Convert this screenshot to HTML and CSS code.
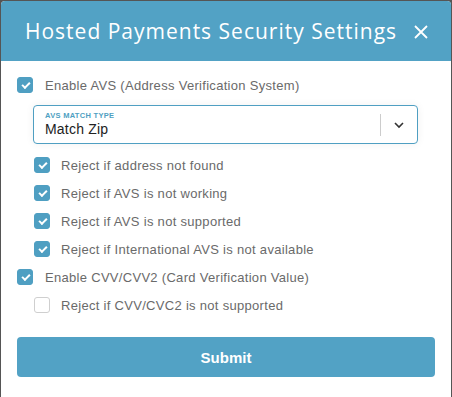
FILE: index.html
```html
<!DOCTYPE html>
<html lang="en">
<head>
    <meta charset="UTF-8">
    <title>Hosted Payments Security Settings</title>
    <link rel="stylesheet" href="styles.css">
</head>
<body>
<div class="modal">
    <div class="modal-header">
        <h2>Hosted Payments Security Settings</h2>
        <svg class="close" width="16" height="16" viewBox="0 0 16 16">
            <path d="M2 2 L14 14 M14 2 L2 14" stroke="#fff" stroke-width="1.8" fill="none"/>
        </svg>
    </div>
    <div class="modal-body">
        <label class="row">
            <span class="box checked"></span>
            Enable AVS (Address Verification System)
        </label>
        <div class="select">
            <div class="select-value">
                <span class="select-label">AVS MATCH TYPE</span>
                <span class="select-text">Match Zip</span>
            </div>
            <span class="select-sep"></span>
            <svg class="chevron" width="12" height="8" viewBox="0 0 12 8">
                <path d="M2 2 L6 6 L10 2" stroke="#333" stroke-width="1.6" fill="none"/>
            </svg>
        </div>
        <label class="row sub">
            <span class="box checked"></span>
            Reject if address not found
        </label>
        <label class="row sub">
            <span class="box checked"></span>
            Reject if AVS is not working
        </label>
        <label class="row sub">
            <span class="box checked"></span>
            Reject if AVS is not supported
        </label>
        <label class="row sub">
            <span class="box checked"></span>
            Reject if International AVS is not available
        </label>
        <label class="row">
            <span class="box checked"></span>
            Enable CVV/CVV2 (Card Verification Value)
        </label>
        <label class="row sub">
            <span class="box"></span>
            Reject if CVV/CVC2 is not supported
        </label>
        <button class="submit">Submit</button>
    </div>
</div>
</body>
</html>
```

FILE: styles.css
```css
html, body {
    margin: 0;
    background: #555555;
    height: 100%;
    overflow: hidden;
}

body {
    padding: 1px 1px 0 1px;
    box-sizing: border-box;
    font-family: "Liberation Sans", Arial, sans-serif;
}

.modal {
    background: #ffffff;
    border-radius: 4px 4px 0 0;
    height: 100%;
    overflow: hidden;
}

.modal-header {
    background: #52a2c5;
    height: 60px;
    display: flex;
    align-items: center;
    padding: 0 22px 0 24px;
}

.modal-header h2 {
    flex: 1;
    margin: 0;
    color: #ffffff;
    font-family: "Open Sans", sans-serif;
    font-weight: 400;
    font-size: 21px;
    letter-spacing: 1px;
    white-space: nowrap;
}

.close {
    margin-top: 1px;
}

.modal-body {
    padding: 10px 16px 0 16px;
    display: flex;
    flex-direction: column;
}

.row {
    height: 28px;
    display: flex;
    align-items: center;
    gap: 12px;
    color: #6a6a6a;
    font-size: 13px;
    letter-spacing: 0.3px;
}

.row.sub {
    padding-left: 17px;
    gap: 11px;
}

.box {
    width: 16px;
    height: 16px;
    box-sizing: border-box;
    border-radius: 3px;
    border: 1px solid #cfcfcf;
    background: #ffffff;
    flex-shrink: 0;
    position: relative;
}

.box.checked {
    background: #4f9fc2;
    border-color: #4f9fc2;
}

.box.checked::after {
    content: "";
    position: absolute;
    left: 4px;
    top: 4px;
    width: 6px;
    height: 3px;
    border-left: 2px solid #ffffff;
    border-bottom: 2px solid #ffffff;
    transform: rotate(-45deg);
}

.select {
    margin: 6px 17px 7px 16px;
    height: 39px;
    box-sizing: border-box;
    border: 1px solid #4f9fc2;
    border-radius: 4px;
    box-shadow: 0 0 8px rgba(0, 0, 0, 0.06);
    display: flex;
    align-items: center;
    padding: 0 12px 0 11px;
}

.select-value {
    flex: 1;
    display: flex;
    flex-direction: column;
}

.select-label {
    color: #4f9fc2;
    font-size: 7.5px;
    font-weight: bold;
    letter-spacing: 0.3px;
    line-height: 9px;
    margin-top: 0;
}

.select-text {
    color: #222222;
    font-size: 14px;
    line-height: 18px;
    letter-spacing: 0.2px;
}

.select-sep {
    width: 1px;
    height: 22px;
    background: #cccccc;
    margin-right: 12px;
}

.submit {
    margin-top: 18px;
    height: 40px;
    border: none;
    border-radius: 4px;
    background: #52a2c5;
    color: #ffffff;
    font-family: "Liberation Sans", Arial, sans-serif;
    font-weight: bold;
    font-size: 15px;
}
```
